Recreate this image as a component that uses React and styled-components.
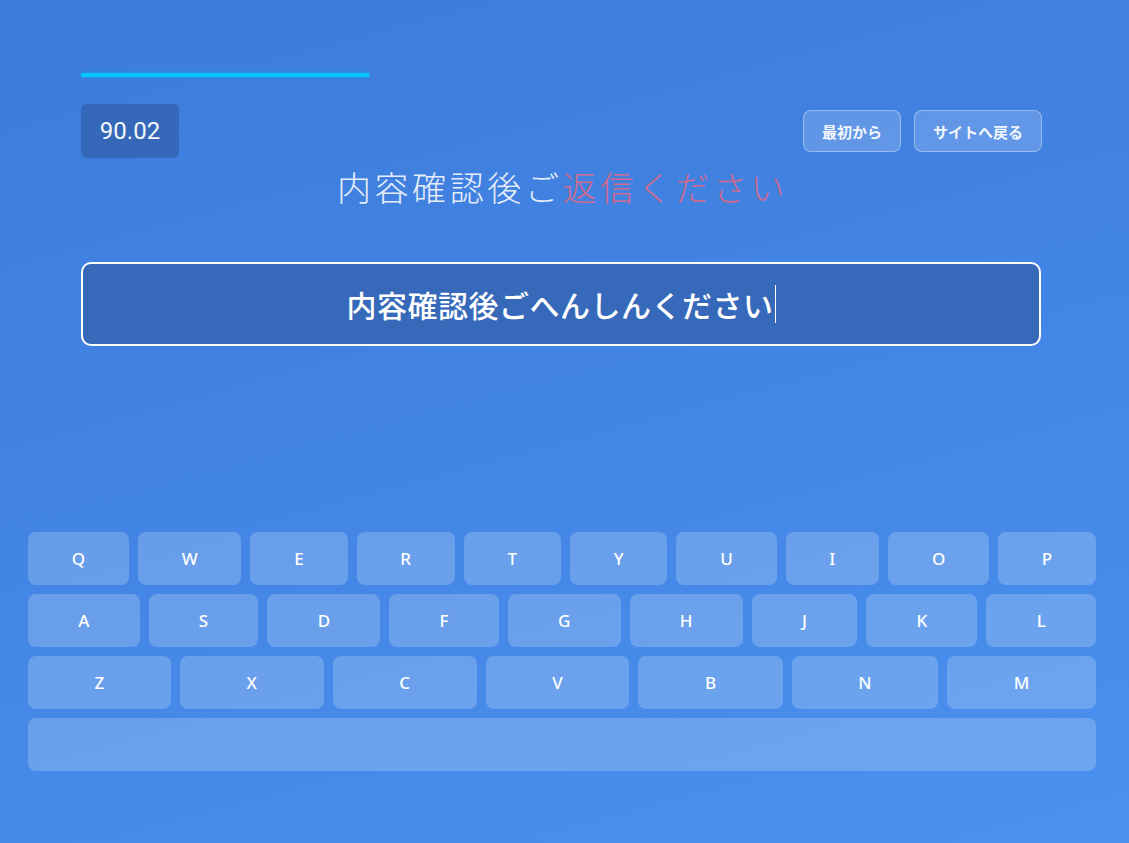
import React from 'react';
import styled, { createGlobalStyle } from 'styled-components';

const GlobalStyle = createGlobalStyle`
  html, body {
    margin: 0;
    padding: 0;
    height: 100%;
  }
  body {
    background: linear-gradient(165deg, #3d7bdb 0%, #4385e4 50%, #4b91ef 100%);
    font-family: "Noto Sans", "Noto Sans CJK JP", sans-serif;
    color: #fff;
  }
`;

const Page = styled.div`
  width: 1129px;
  height: 843px;
  display: flex;
  flex-direction: column;
  box-sizing: border-box;
  padding-top: 73px;
`;

const Stage = styled.div`
  width: 960px;
  margin: 0 auto 0 81px;
  display: flex;
  flex-direction: column;
`;

const Progress = styled.div`
  height: 4px;
  width: 100%;
  background: transparent;
`;

const ProgressFill = styled.div`
  height: 100%;
  background: #00c8ff;
  box-shadow: 0 0 4px rgba(0, 200, 255, 0.5);
`;

const Header = styled.div`
  display: flex;
  justify-content: space-between;
  align-items: center;
  margin-top: 27px;
`;

const Score = styled.div`
  width: 98px;
  height: 54px;
  border-radius: 6px;
  background: #3568b8;
  display: flex;
  align-items: center;
  justify-content: center;
  font-family: Roboto, "Liberation Sans", sans-serif;
  font-size: 24px;
  color: #f4f7fc;
`;

const Actions = styled.div`
  display: flex;
  gap: 13px;
  margin-right: -1px;
`;

const Button = styled.button`
  height: 42px;
  width: ${p => p.$w}px;
  border-radius: 8px;
  border: 1px solid rgba(255, 255, 255, 0.35);
  background: rgba(255, 255, 255, 0.17);
  color: #f2f6fd;
  font-family: "Noto Sans CJK JP", sans-serif;
  font-weight: 700;
  font-size: 15px;
  cursor: pointer;
  padding: 0;
`;

const Title = styled.div`
  text-align: center;
  font-family: "Noto Sans CJK JP", sans-serif;
  font-weight: 300;
  font-size: 34px;
  letter-spacing: 3.6px;
  line-height: 42px;
  margin-top: 8px;
  padding-left: 3px;
`;

const Typed = styled.span`
  color: #e6eefb;
`;

const Rest = styled.span`
  color: #cf6a8e;
`;

const InputBox = styled.div`
  margin-top: 54px;
  height: 84px;
  box-sizing: border-box;
  border: 2px solid #ffffff;
  border-radius: 10px;
  background: #3769ba;
  display: flex;
  align-items: center;
  justify-content: center;
  font-family: "Noto Sans CJK JP", sans-serif;
  font-weight: 500;
  font-size: 30px;
  letter-spacing: 0.5px;
  color: #fff;
`;

const Caret = styled.span`
  display: inline-block;
  width: 1px;
  height: 38px;
  background: #fff;
  margin-left: 1px;
`;

const Keyboard = styled.div`
  margin-top: auto;
  margin-bottom: 72px;
  padding: 0 33px 0 28px;
  display: flex;
  flex-direction: column;
  gap: 9px;
`;

const Row = styled.div`
  display: flex;
  gap: 9px;
`;

const Key = styled.div`
  flex: 1 1 auto;
  height: 53px;
  border-radius: 8px;
  background: rgba(255, 255, 255, 0.2);
  display: flex;
  align-items: center;
  justify-content: center;
  font-family: "Noto Sans", sans-serif;
  font-weight: 500;
  font-size: 17px;
  color: #fff;
`;

const rows = ['QWERTYUIOP', 'ASDFGHJKL', 'ZXCVBNM'];

export default function App() {
  return (
    <>
      <GlobalStyle />
      <Page>
        <Stage>
          <Progress>
            <ProgressFill style={{ width: '30%' }} />
          </Progress>
          <Header>
            <Score>90.02</Score>
            <Actions>
              <Button $w={98}>最初から</Button>
              <Button $w={128}>サイトへ戻る</Button>
            </Actions>
          </Header>
          <Title>
            <Typed>内容確認後ご</Typed>
            <Rest>返信ください</Rest>
          </Title>
          <InputBox>
            内容確認後ごへんしんください
            <Caret />
          </InputBox>
        </Stage>
        <Keyboard>
          {rows.map(r => (
            <Row key={r}>
              {r.split('').map(k => (
                <Key key={k}>{k}</Key>
              ))}
            </Row>
          ))}
          <Row>
            <Key />
          </Row>
        </Keyboard>
      </Page>
    </>
  );
}
